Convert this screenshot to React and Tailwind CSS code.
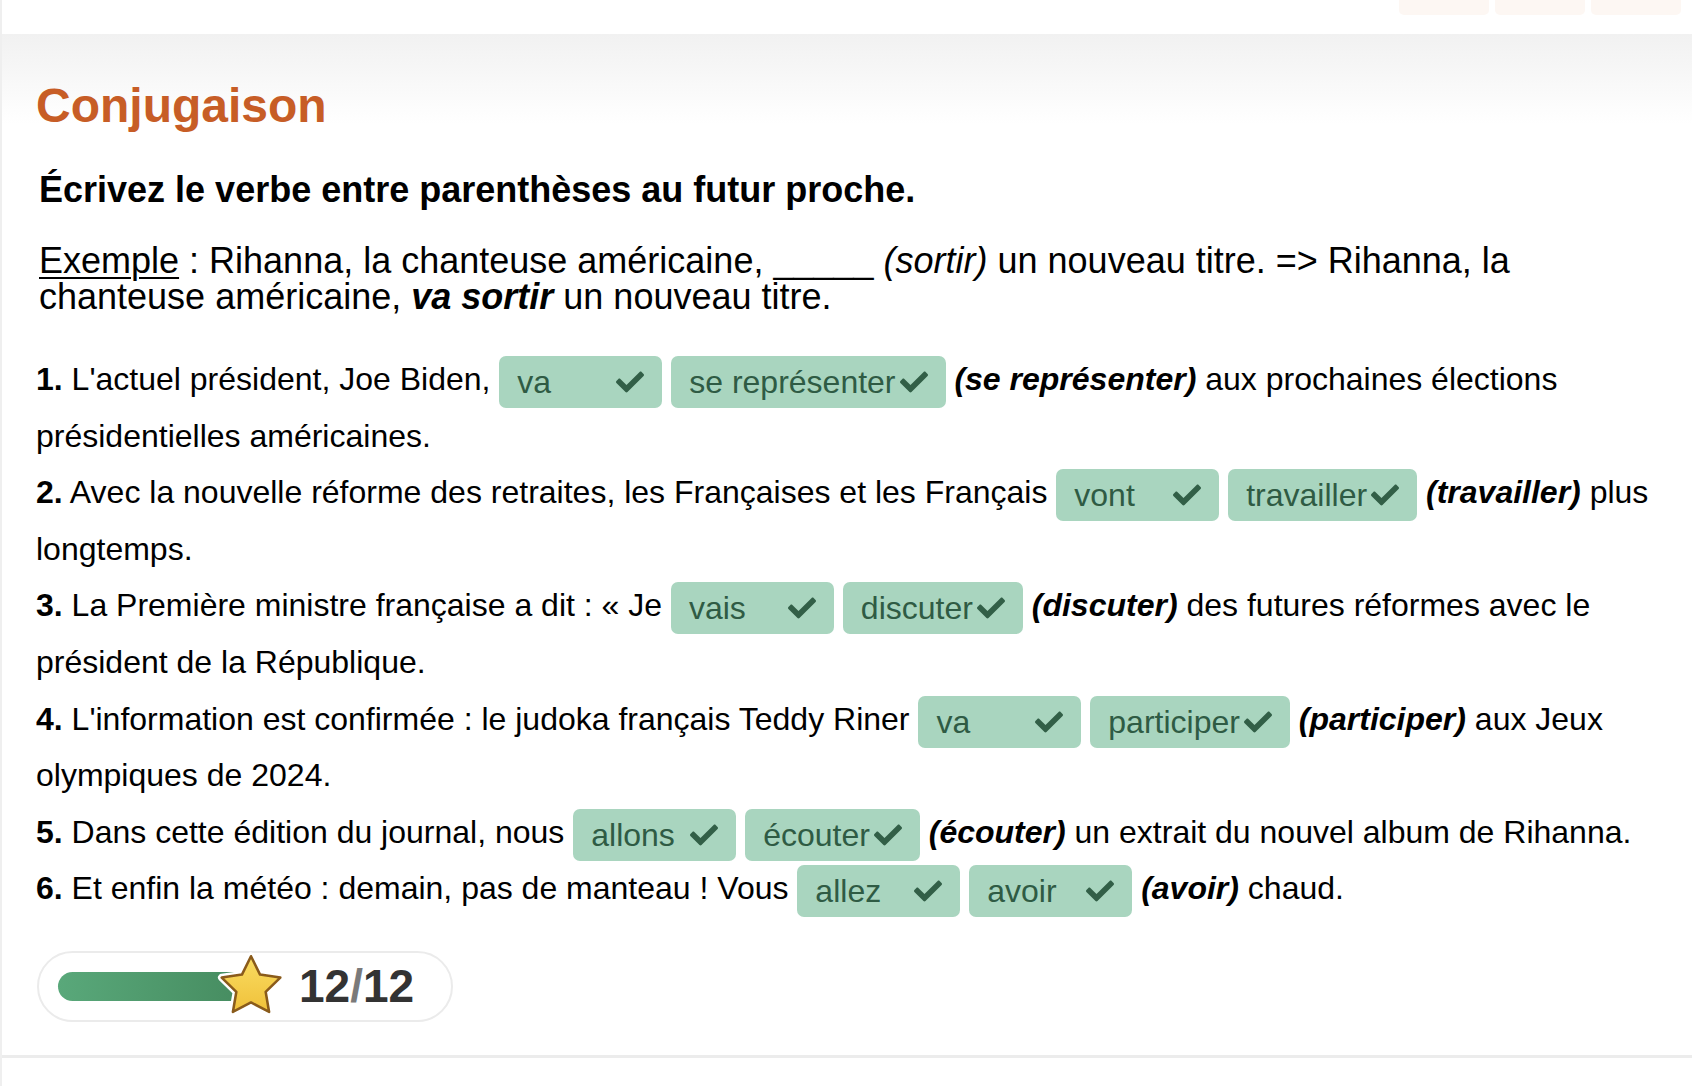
import React from "react";

const Check = () => (
  <svg viewBox="0 0 512 512" className="h-[28px] w-[28px] shrink-0" fill="#325f47">
    <path d="M173.898 439.404l-166.4-166.4c-9.997-9.997-9.997-26.206 0-36.204l36.203-36.204c9.997-9.998 26.207-9.998 36.204 0L192 312.69 432.095 72.596c9.997-9.997 26.207-9.997 36.204 0l36.203 36.204c9.997 9.997 9.997 26.206 0 36.204l-294.4 294.401c-9.998 9.997-26.207 9.997-36.204-.001z" />
  </svg>
);

const Box = ({ children }) => (
  <span className="-my-[3px] inline-flex h-[52px] min-w-[163px] items-center justify-between gap-[4px] rounded-[7px] bg-[#a9d5bf] px-[18px] align-[-3px] leading-normal text-[#2f5b44]">
    <span>{children}</span>
    <Check />
  </span>
);

const Verb = ({ children }) => (
  <b>
    <i>{children}</i>
  </b>
);

const Star = () => (
  <svg viewBox="0 0 64 64" className="-ml-[27px] h-[68px] w-[68px] shrink-0">
    <defs>
      <linearGradient id="sg" x1="0" y1="0" x2="0" y2="1">
        <stop offset="0" stopColor="#f9dc62" />
        <stop offset="1" stopColor="#f0c13a" />
      </linearGradient>
    </defs>
    <polygon
      points="32,4 40.52,21.27 59.58,24.04 45.79,37.48 49.05,56.46 32,47.5 14.95,56.46 18.21,37.48 4.42,24.04 23.48,21.27"
      fill="#ffffff"
      stroke="#ffffff"
      strokeWidth="7"
      strokeLinejoin="round"
    />
    <polygon
      points="32,4 40.52,21.27 59.58,24.04 45.79,37.48 49.05,56.46 32,47.5 14.95,56.46 18.21,37.48 4.42,24.04 23.48,21.27"
      fill="url(#sg)"
      stroke="#8a5b1b"
      strokeWidth="2.4"
      strokeLinejoin="round"
    />
  </svg>
);

export default function App() {
  return (
    <div className="min-h-[1086px] w-[1692px] border-l-2 border-[#efefef] bg-white font-['Liberation_Sans',Arial,sans-serif] text-black">
      <div className="flex h-[34px] justify-end gap-[6px] pr-[11px]">
        <div className="h-[15px] w-[90px] rounded-b-[5px] bg-[#fdf7f3]" />
        <div className="h-[15px] w-[90px] rounded-b-[5px] bg-[#fdf7f3]" />
        <div className="h-[15px] w-[90px] rounded-b-[5px] bg-[#fdf7f3]" />
      </div>

      <div className="border-b-[3px] border-[#ececec] bg-[linear-gradient(to_bottom,#f1f1f1,#ffffff_90px)] pb-[33px] pl-[34px] pr-[30px] pt-[43px]">
        <h1 className="text-[48px] font-bold leading-[1.2] text-[#c75d26]">Conjugaison</h1>

        <p className="ml-[3px] mt-[34px] text-[36px] font-bold leading-[1.15]">
          Écrivez le verbe entre parenthèses au futur proche.
        </p>

        <p className="ml-[3px] mt-[33px] text-[36px] leading-[36px]">
          <span className="underline decoration-[2px] underline-offset-[4px]">Exemple</span> : Rihanna, la chanteuse
          américaine, _____ <i>(sortir)</i> un nouveau titre. =&gt; Rihanna, la chanteuse américaine,{" "}
          <Verb>va sortir</Verb> un nouveau titre.
        </p>

        <div className="mt-[36px] text-[32px] leading-[56.6px]">
          <p>
            <b>1.</b> L'actuel président, Joe Biden, <Box>va</Box> <Box>se représenter</Box>{" "}
            <Verb>(se représenter)</Verb> aux prochaines élections présidentielles américaines.
          </p>
          <p>
            <b>2.</b> Avec la nouvelle réforme des retraites, les Françaises et les Français <Box>vont</Box>{" "}
            <Box>travailler</Box> <Verb>(travailler)</Verb> plus longtemps.
          </p>
          <p>
            <b>3.</b> La Première ministre française a dit : «&nbsp;Je <Box>vais</Box> <Box>discuter</Box>{" "}
            <Verb>(discuter)</Verb> des futures réformes avec le président de la République.
          </p>
          <p>
            <b>4.</b> L'information est confirmée : le judoka français Teddy Riner <Box>va</Box>{" "}
            <Box>participer</Box> <Verb>(participer)</Verb> aux Jeux olympiques de 2024.
          </p>
          <p>
            <b>5.</b> Dans cette édition du journal, nous <Box>allons</Box> <Box>écouter</Box>{" "}
            <Verb>(écouter)</Verb> un extrait du nouvel album de Rihanna.
          </p>
          <p>
            <b>6.</b> Et enfin la météo : demain, pas de manteau ! Vous <Box>allez</Box> <Box>avoir</Box>{" "}
            <Verb>(avoir)</Verb> chaud.
          </p>
        </div>

        <div className="ml-[1px] mt-[34px] inline-flex h-[71px] items-center rounded-full border-2 border-[#ebebeb] bg-white pl-[19px] pr-[37px]">
          <div className="h-[29px] w-[186px] rounded-l-full bg-gradient-to-r from-[#59a87a] to-[#468c60]" />
          <Star />
          <span className="ml-[14px] text-[46px] font-bold leading-none text-[#333333]">
            12<span className="text-[#7a7a7a]">/</span>12
          </span>
        </div>
      </div>
    </div>
  );
}
